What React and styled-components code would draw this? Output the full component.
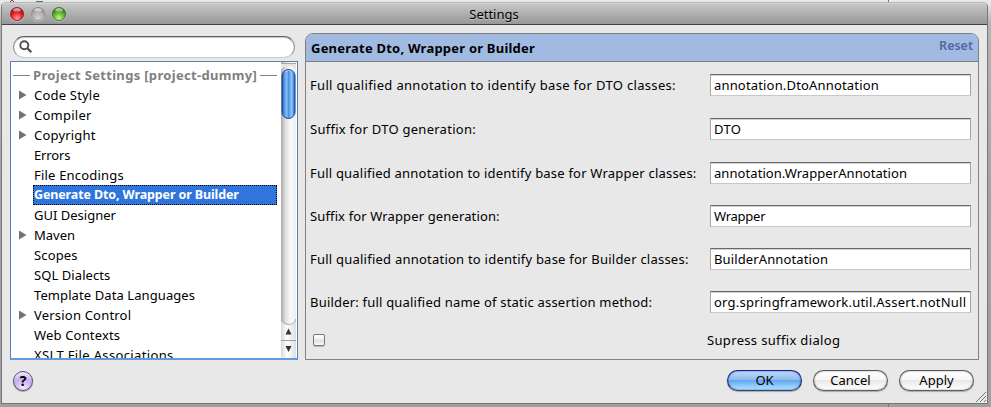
import React from "react";
import styled, { createGlobalStyle } from "styled-components";

const Global = createGlobalStyle`
  *, *::before, *::after { box-sizing: border-box; }
  body {
    margin: 0;
    overflow: hidden;
    font-family: "Noto Sans", "Open Sans", sans-serif;
    font-size: 13px;
    color: #000;
  }
`;

const Desktop = styled.div`
  position: relative;
  width: 991px;
  height: 407px;
  padding: 2px 3px 3px 1px;
  background: linear-gradient(#e9e9e9 0, #e6e6e6 4px, #b5b5b5 22px, #a3a3a3 200px, #a0a0a0 100%);
`;

const BackdropMarks = styled.svg`
  position: absolute;
  inset: 0;
`;

const Window = styled.div`
  position: relative;
  display: flex;
  flex-direction: column;
  height: 402px;
  overflow: hidden;
  border: 1px solid #777;
  border-top-color: #b9b9b9;
  border-radius: 5px 5px 0 0;
  background: #e8e8e8;
`;

const TitleBar = styled.div`
  display: flex;
  align-items: center;
  flex: none;
  height: 22px;
  padding-left: 7px;
  border-bottom: 1px solid #414141;
  background: linear-gradient(#e0e0e0 0, #c6c6c6 1px, #979797 100%);
`;

const Title = styled.div`
  flex: 1;
  margin-right: 70px;
  line-height: 20px;
  text-align: center;
  text-shadow: 0 1px 0 rgba(255, 255, 255, 0.35);
`;

const Lights = styled.svg`
  display: block;
  flex: none;
`;

const Columns = styled.div`
  display: flex;
  gap: 7px;
  height: 335px;
  padding: 8px 8px 0 8px;
`;

const Sidebar = styled.div`
  width: 288px;
  padding-top: 3px;
`;

const Search = styled.div`
  display: flex;
  align-items: center;
  width: 282px;
  height: 22px;
  margin: 0 0 3px 3px;
  padding-left: 5px;
  border: 1px solid #999;
  border-top: 1px solid #606060;
  border-bottom-color: #c9c9c9;
  border-radius: 11px;
  background: #fff;
  box-shadow: inset 0 1px 1px #c4c4c4;
`;

const Tree = styled.div`
  display: flex;
  height: 299px;
  border: 1px solid #5b7fb8;
  border-bottom: 2px solid #619bda;
  background: #fff;
`;

const Rows = styled.div`
  flex: 1;
  height: 296px;
  padding: 3px 4px 0 2px;
  overflow: hidden;
`;

const GroupTitle = styled.div`
  display: flex;
  align-items: center;
  gap: 3px;
  height: 20px;
  color: #808080;
  font-weight: 700;
  white-space: nowrap;
  letter-spacing: 0.32px;
  &::before, &::after { content: ""; height: 1px; background: #808080; }
  &::before { width: 17px; }
  &::after { flex: 1; }
`;

const Row = styled.div`
  display: flex;
  align-items: center;
  height: 20px;
  white-space: nowrap;
`;

const Disclosure = styled.svg`
  display: block;
  flex: none;
  width: 20px;
  height: 20px;
`;

const RowLabel = styled.div`
  flex: 1;
  height: 20px;
  border: 1px dotted ${(p) => (p.$selected ? "#000" : "transparent")};
  background: ${(p) => (p.$selected ? "#2f75dc" : "transparent")};
  color: ${(p) => (p.$selected ? "#fff" : "#000")};
  font-weight: ${(p) => (p.$selected ? 700 : 400)};
  font-size: ${(p) => (p.$selected ? 12.5 : 13)}px;
  line-height: 18px;
  letter-spacing: ${(p) => p.$track}px;
`;

const ScrollBar = styled.svg`
  display: block;
  flex: none;
  margin-right: 1px;
`;

const Panel = styled.div`
  flex: 1;
  height: 327px;
  border: 1px solid #808080;
  border-radius: 8px 8px 0 0;
`;

const PanelHeader = styled.div`
  display: flex;
  justify-content: space-between;
  height: 28px;
  padding: 0 5px 0 5px;
  border-bottom: 1px solid #808080;
  border-radius: 7px 7px 0 0;
  background: #a0bae2;
`;

const PanelTitle = styled.div`
  font-weight: 700;
  line-height: 28px;
  letter-spacing: 0.22px;
`;

const Reset = styled.div`
  color: #5565a4;
  font-weight: 600;
  font-size: 12.5px;
  line-height: 23px;
`;

const Form = styled.div`
  display: grid;
  grid-template-columns: 400px 261px;
  grid-template-rows: 44px 44px 43px 43px 43px 43px 33px;
  padding: 12px 0 0 4px;
`;

const Label = styled.div`
  height: 22px;
  line-height: 23px;
  white-space: nowrap;
  letter-spacing: ${(p) => p.$track}px;
`;

const Field = styled.div`
  height: 22px;
  padding-left: 3px;
  border: 1px solid #a5a5a5;
  border-top: 1px solid #686868;
  border-bottom-color: #c8c8c8;
  background: #fff;
  box-shadow: inset 0 1px 0 #d2d2d2;
  line-height: 21px;
  white-space: nowrap;
  letter-spacing: ${(p) => p.$track}px;
`;

const CheckBox = styled.div`
  width: 12px;
  height: 12px;
  border: 1px solid #777;
  margin-left: 3px;
  border-radius: 2px;
  background: linear-gradient(#fff 0, #eee 45%, #ddd 50%, #fafafa 100%);
  box-shadow: 0 1px 0 #bbb;
`;

const CheckLabel = styled.div`
  margin: -5px 0 0 -3px;
  line-height: 23px;
  letter-spacing: 0.34px;
`;

const Footer = styled.div`
  display: flex;
  gap: 11px;
  padding: 10px 13px 0 11px;
`;

const Help = styled.div`
  width: 20px;
  height: 20px;
  margin: 1px auto 0 0;
  border: 1px solid #5d4a78;
  border-radius: 50%;
  background: radial-gradient(circle at 50% 90%, #f3eaff 0, #c9aef3 50%, transparent 75%), linear-gradient(#eee6fa, #b698e4);
  box-shadow: 0 1px 1px #999;
  font-weight: 700;
  font-size: 14px;
  line-height: 18px;
  text-align: center;
`;

const Button = styled.div`
  width: 75px;
  height: 21px;
  border: 1px solid ${(p) => (p.$primary ? "#1a1f84" : "#565656")};
  border-bottom-color: ${(p) => (p.$primary ? "#34496f" : "#5f5f5f")};
  border-radius: 11px;
  background: ${(p) =>
    p.$primary
      ? "linear-gradient(#c3dbf6 0, #8dbdf0 45%, #66a6ea 50%, #8cc6fb 75%, #b5e6ff 100%)"
      : "linear-gradient(#fff 0, #f7f7f7 45%, #e8e8e8 50%, #f4f4f4 75%, #fff 100%)"};
  box-shadow: 0 1px 1px #aaa, inset 0 0 2px ${(p) => (p.$primary ? "#2454b0" : "#999")};
  line-height: 19px;
  text-align: center;
`;

const Grip = styled.svg`
  position: absolute;
  right: 0;
  bottom: 0;
`;

const items = [
  ["Code Style", true, 0.2],
  ["Compiler", true, 0.25],
  ["Copyright", true, 0.2],
  ["Errors", false, -0.15],
  ["File Encodings", false, 0.2],
  ["Generate Dto, Wrapper or Builder", false, -0.12],
  ["GUI Designer", false, 0],
  ["Maven", true, 0],
  ["Scopes", false, 0.15],
  ["SQL Dialects", false, 0.08],
  ["Template Data Languages", false, 0.09],
  ["Version Control", true, 0.2],
  ["Web Contexts", false, 0.17],
  ["XSLT File Associations", false, 0.36],
];

const fields = [
  ["Full qualified annotation to identify base for DTO classes:", 0.33, "annotation.DtoAnnotation", 0.17],
  ["Suffix for DTO generation:", 0.27, "DTO", 0.3],
  ["Full qualified annotation to identify base for Wrapper classes:", 0.21, "annotation.WrapperAnnotation", 0.07],
  ["Suffix for Wrapper generation:", 0.13, "Wrapper", -0.25],
  ["Full qualified annotation to identify base for Builder classes:", 0.23, "BuilderAnnotation", 0.12],
  ["Builder: full qualified name of static assertion method:", 0.2, "org.springframework.util.Assert.notNull", 0.23],
];

const lights = [
  ["red", 8, "#8e1018", "#e5222c", "#ff9c98"],
  ["gray", 29, "#858585", "#b4b4b4", "#d2d2d2"],
  ["green", 50, "#2c6416", "#5fb32f", "#c5f391"],
];

function TrafficLights() {
  return (
    <Lights width="62" height="20">
      <defs>
        {lights.map(([id, , dark, mid, light]) => (
          <radialGradient key={id} id={id} cx=".5" cy=".8" r=".75">
            <stop offset="0" stopColor={light} />
            <stop offset=".55" stopColor={mid} />
            <stop offset="1" stopColor={dark} />
          </radialGradient>
        ))}
        <linearGradient id="gloss" x2="0" y2="1">
          <stop offset="0" stopColor="#fff" stopOpacity=".85" />
          <stop offset="1" stopColor="#fff" stopOpacity=".1" />
        </linearGradient>
      </defs>
      {lights.map(([id, x, dark]) => (
        <g key={id} transform={`translate(${x} 10)`}>
          <circle cy=".8" r="7.200" fill="#ddd" opacity=".5" />
          <circle r="6.600" fill={`url(#${id})`} stroke={dark} strokeWidth=".7" />
          <ellipse cy="-3.800" rx="3.800" ry="2" fill="url(#gloss)" />
        </g>
      ))}
    </Lights>
  );
}

function TreeScroll() {
  return (
    <ScrollBar width="15" height="296">
      <defs>
        <linearGradient id="track">
          <stop offset="0" stopColor="#aaa" />
          <stop offset=".3" stopColor="#dedede" />
          <stop offset=".65" stopColor="#fafafa" />
          <stop offset="1" stopColor="#ededed" />
        </linearGradient>
        <linearGradient id="thumb">
          <stop offset="0" stopColor="#1f4cae" />
          <stop offset=".2" stopColor="#5f9de8" />
          <stop offset=".38" stopColor="#8abcf2" />
          <stop offset=".5" stopColor="#4a90e4" />
          <stop offset=".75" stopColor="#8ccbf8" />
          <stop offset="1" stopColor="#2559b8" />
        </linearGradient>
        <linearGradient id="arrows">
          <stop offset="0" stopColor="#d9d9d9" />
          <stop offset=".4" stopColor="#fff" />
          <stop offset="1" stopColor="#dedede" />
        </linearGradient>
      </defs>
      <rect width="15" height="296" fill="url(#track)" />
      <path d="M0 1.500H15" stroke="#a9a9a9" />
      <path d="M0 2H15V8Q13 4 7.500 4Q2 4 0 8Z" fill="#e5e5e5" />
      <path d="M0 257Q2 262.500 7.500 262.500Q13 262.500 15 257V296H0Z" fill="url(#arrows)" />
      <path d="M0 257Q2 262.500 7.500 262.500Q13 262.500 15 257" fill="none" stroke="#999" strokeWidth=".8" />
      <rect x="1" y="7.500" width="13" height="49" rx="6.500" fill="url(#thumb)" stroke="#1b43a1" />
      <path d="M4 9.500Q7.500 7.500 11 9.500" fill="none" stroke="#a8c8f0" />
      <path d="M7.500 266.500L10.500 272.500H4.500Z" fill="#333" />
      <path d="M0 278.500H15" stroke="#a0a0a0" />
      <path d="M4.500 284H10.500L7.500 290Z" fill="#333" />
    </ScrollBar>
  );
}

export default function App() {
  return (
    <Desktop>
      <Global />
      <BackdropMarks width="991" height="407">
        <path d="M10 2L12 0L15 3" stroke="#a22" fill="none" />
        <path d="M36 1.500H43" stroke="#4a8a4a" />
        <path d="M888.500 0V3M888.500 404V407" stroke="#777" />
      </BackdropMarks>
      <Window>
        <TitleBar>
          <TrafficLights />
          <Title>Settings</Title>
        </TitleBar>
        <Columns>
          <Sidebar>
            <Search>
              <svg width="14" height="14" fill="none" stroke="#505050">
                <circle cx="5.300" cy="5.300" r="4" strokeWidth="1.900" />
                <path d="M8.300 8.300L12.300 12.300" strokeWidth="2.300" />
              </svg>
            </Search>
            <Tree>
              <Rows>
                <GroupTitle><span>Project Settings [project-dummy]</span></GroupTitle>
                {items.map(([text, branch, track], i) => (
                  <Row key={text}>
                    <Disclosure>{branch && <path d="M6 5.500L13.500 10L6 14.500Z" fill="#737373" />}</Disclosure>
                    <RowLabel $selected={i === 5} $track={track}>{text}</RowLabel>
                  </Row>
                ))}
              </Rows>
              <TreeScroll />
            </Tree>
          </Sidebar>
          <Panel>
            <PanelHeader>
              <PanelTitle>Generate Dto, Wrapper or Builder</PanelTitle>
              <Reset>Reset</Reset>
            </PanelHeader>
            <Form>
              {fields.map(([label, labelTrack, value, valueTrack]) => (
                <React.Fragment key={label}>
                  <Label $track={labelTrack}>{label}</Label>
                  <Field $track={valueTrack}>{value}</Field>
                </React.Fragment>
              ))}
              <CheckBox />
              <CheckLabel>Supress suffix dialog</CheckLabel>
            </Form>
          </Panel>
        </Columns>
        <Footer>
          <Help>?</Help>
          <Button $primary>OK</Button>
          <Button>Cancel</Button>
          <Button>Apply</Button>
        </Footer>
        <Grip width="13" height="13" stroke="#777" fill="none">
          <path d="M2 12L12 2M6 12L12 6M10 12L12 10" />
        </Grip>
      </Window>
    </Desktop>
  );
}
